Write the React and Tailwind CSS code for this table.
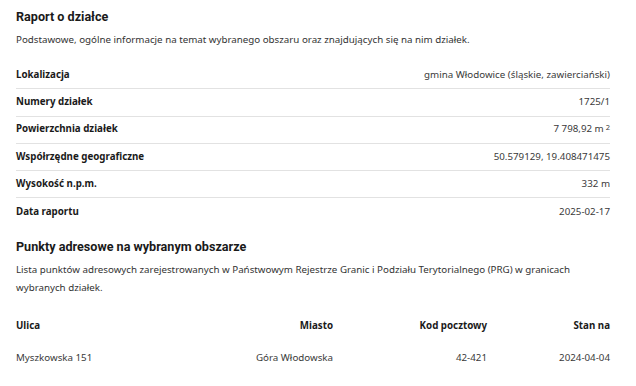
import React from "react";

const rows = [
  { label: "Lokalizacja", value: "gmina Włodowice (śląskie, zawierciański)" },
  { label: "Numery działek", value: "1725/1" },
  {
    label: "Powierzchnia działek",
    value: (
      <>
        7 798,92 m<sup className="text-[7.5px] relative -top-[2px] ml-[2px]">2</sup>
      </>
    ),
  },
  { label: "Współrzędne geograficzne", value: "50.579129, 19.408471475" },
  { label: "Wysokość n.p.m.", value: "332 m" },
  { label: "Data raportu", value: "2025-02-17" },
];

const points = [
  { street: "Myszkowska 151", city: "Góra Włodowska", code: "42-421", date: "2024-04-04" },
];

export default function App() {
  return (
    <div className="w-[636px] h-[386px] overflow-hidden bg-white pl-4 pr-[26px] text-[#212121] font-['Noto_Sans',sans-serif]">
      {/* Raport */}
      <h2 className="pt-[9px] text-[12.6px] leading-[16px] font-bold font-['Roboto',sans-serif] text-[#1a1a1a]">
        Raport o działce
      </h2>
      <p className="mt-[8px] text-[9.75px] leading-[14px] text-[#333]">
        Podstawowe, ogólne informacje na temat wybranego obszaru oraz znajdujących się na nim działek.
      </p>

      <div className="mt-[15px]">
        {rows.map((row, i) => (
          <div
            key={i}
            className={`flex items-center justify-between h-[27.3px] text-[9.75px] ${
              i < rows.length - 1 ? "border-b border-[#e2e2e2]" : ""
            }`}
          >
            <span className="font-bold text-[#1a1a1a]">{row.label}</span>
            <span className="text-[#3a3a3a]">{row.value}</span>
          </div>
        ))}
      </div>

      {/* Punkty adresowe */}
      <h2 className="mt-[13px] text-[12.6px] leading-[16px] font-bold font-['Roboto',sans-serif] text-[#1a1a1a]">
        Punkty adresowe na wybranym obszarze
      </h2>
      <p className="mt-[6px] text-[9.75px] leading-[18px] text-[#333]">
        Lista punktów adresowych zarejestrowanych w Państwowym Rejestrze Granic i Podziału Terytorialnego (PRG) w granicach wybranych działek.
      </p>

      <div className="mt-[14px] text-[9.75px]">
        <div className="grid grid-cols-[150px_167px_154px_1fr] h-[32px] items-center font-bold text-[#1a1a1a]">
          <span>Ulica</span>
          <span className="text-right">Miasto</span>
          <span className="text-right">Kod pocztowy</span>
          <span className="text-right">Stan na</span>
        </div>
        {points.map((p, i) => (
          <div
            key={i}
            className="grid grid-cols-[150px_167px_154px_1fr] h-[32px] items-center text-[#3a3a3a]"
          >
            <span>{p.street}</span>
            <span className="text-right">{p.city}</span>
            <span className="text-right">{p.code}</span>
            <span className="text-right">{p.date}</span>
          </div>
        ))}
      </div>
    </div>
  );
}
